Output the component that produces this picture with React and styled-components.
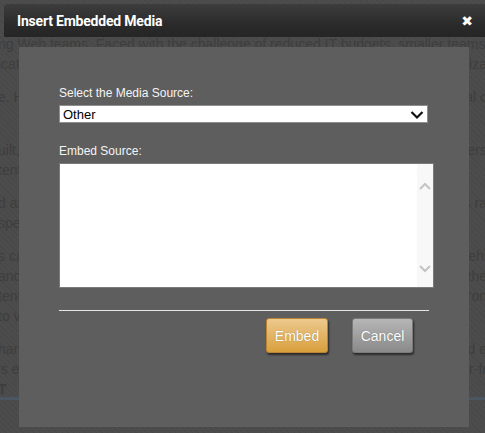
import React from 'react'
import styled, { createGlobalStyle } from 'styled-components'

const GlobalStyle = createGlobalStyle`
  html, body {
    margin: 0;
    padding: 0;
  }
  body {
    width: 485px;
    height: 433px;
    overflow: hidden;
    font-family: "Liberation Sans", Arial, sans-serif;
  }
`

const lines = [
  [['ng Web teams. Faced with the challenge of reduced IT budgets, smaller teams, and'], ['ication of web content and distributed authoring across organ', 'iza']],
  [['e. How content managers can deliver a consistent digital', 'al c']],
  [['uilt, fast to deploy, simple to use for editors and develop', 'ers'], ['tent teams across every channel and every device']],
  [['d and managed from a single place, content moves at the speed', 's ra'], ['speed of business with fewer steps and more control']],
  [['s can be published to any site, page or region that a vehicle', 'ehi'], ['and templates keep pages consistent across all of the', 'the'], ['tent is stored once and reused across every environment', 'ron'], ['to view and approve changes before they go live']],
  [['hands of editors to manage pages in place, with built in and', 'd e'], ["'s editing tools, approval workflows and a clutter-fr", 'r-fr'], ['T', null, true]],
]

const App = () => {
  return (
    <>
      <GlobalStyle />
      <Backdrop>
        <Article>
          {lines.map((para, i) => (
            <Para key={i}>
              {para.map(([start, end, bold], j) => (
                <Line key={j} $bold={bold}>
                  <span>{start}</span>
                  {end && <span>{end}</span>}
                </Line>
              ))}
            </Para>
          ))}
        </Article>
        <Rule />

        <Dialog>
          <TitleBar>
            <Title>Insert Embedded Media</Title>
            <Close>✖</Close>
          </TitleBar>
          <Body>
            <Label>Select the Media Source:</Label>
            <Select>
              <span>Other</span>
              <svg width="14" height="10" viewBox="0 0 14 10">
                <path d="M1.5 2 L7 7.5 L12.5 2" fill="none" stroke="#111" strokeWidth="2.2" />
              </svg>
            </Select>

            <Label $top={21}>Embed Source:</Label>
            <TextArea>
              <Scroll>
                <svg width="12" height="8" viewBox="0 0 12 8">
                  <path d="M1 7 L6 2 L11 7" fill="none" stroke="#c4c4c4" strokeWidth="2" />
                </svg>
                <svg width="12" height="8" viewBox="0 0 12 8">
                  <path d="M1 1 L6 6 L11 1" fill="none" stroke="#c4c4c4" strokeWidth="2" />
                </svg>
              </Scroll>
            </TextArea>

            <Divider />
            <Actions>
              <Button $variant="primary">Embed</Button>
              <Button>Cancel</Button>
            </Actions>
          </Body>
        </Dialog>
      </Backdrop>
    </>
  )
}

export default App

const Backdrop = styled.div`
  position: relative;
  width: 485px;
  height: 433px;
  overflow: hidden;
  background-color: #4c4c4c;
  background-image: repeating-linear-gradient(
    45deg,
    rgba(0, 0, 0, 0.06) 0px,
    rgba(0, 0, 0, 0.06) 1px,
    transparent 1px,
    transparent 4px
  );
`

const Article = styled.div`
  padding-top: 34px;
  margin-left: -2px;
  margin-right: -2px;
  color: #3e3e3e;
  font-size: 14px;
  line-height: 20px;
`

const Para = styled.div`
  margin-bottom: 13px;

  &:nth-child(2) {
    margin-bottom: 33px;
  }
`

const Line = styled.div`
  display: flex;
  justify-content: space-between;
  white-space: nowrap;
  overflow: hidden;
  font-weight: ${p => (p.$bold ? 700 : 400)};
`

const Rule = styled.div`
  position: absolute;
  left: 0;
  right: 0;
  top: 397px;
  height: 3px;
  background: #4a5662;
`

const Dialog = styled.div`
  position: absolute;
  left: 4px;
  top: 4px;
  width: 500px;
`

const TitleBar = styled.div`
  height: 33px;
  display: flex;
  align-items: center;
  justify-content: space-between;
  padding: 0 27px 0 13px;
  box-sizing: border-box;
  width: 496px;
  border-top-left-radius: 4px;
  background: linear-gradient(to bottom, #3d3d3d 0%, #2b2b2b 60%, #252525 100%);
`

const Title = styled.div`
  color: #ffffff;
  font-family: Roboto, "Liberation Sans", sans-serif;
  font-weight: 700;
  font-size: 14px;
  letter-spacing: -0.2px;
`

const Close = styled.div`
  color: #ffffff;
  font-family: "DejaVu Sans", sans-serif;
  font-size: 14px;
  font-weight: 700;
  line-height: 1;
  margin-top: 1px;
`

const Body = styled.div`
  margin: 10px 0 0 15px;
  width: 450px;
  height: 380px;
  box-sizing: border-box;
  padding: 39px 40px 0;
  background: #5e5e5e;
  display: flex;
  flex-direction: column;
  align-items: flex-start;
`

const Label = styled.div`
  margin-top: ${p => p.$top || 0}px;
  color: #f4f4f4;
  font-size: 12px;
  line-height: 14px;
  margin-bottom: 5px;
`

const Select = styled.div`
  width: 369px;
  height: 18px;
  box-sizing: border-box;
  border: 1px solid #8e8e8e;
  background: #ffffff;
  display: flex;
  align-items: center;
  justify-content: space-between;
  padding: 0 3px 0 3px;
  color: #000;
  font-size: 13px;

  svg {
    margin-top: 1px;
  }
`

const TextArea = styled.div`
  width: 375px;
  height: 125px;
  box-sizing: border-box;
  border: 1px solid #7a7a7a;
  background: #ffffff;
  display: flex;
  justify-content: flex-end;
`

const Scroll = styled.div`
  width: 16px;
  background: #f8f8f8;
  display: flex;
  flex-direction: column;
  align-items: center;
  justify-content: space-between;
  padding: 18px 0 14px;
`

const Divider = styled.div`
  margin-top: 22px;
  width: 370px;
  height: 1px;
  background: #e6e6e6;
`

const Actions = styled.div`
  width: 354px;
  margin-top: 7px;
  display: flex;
  justify-content: flex-end;
  gap: 24px;
`

const Button = styled.button`
  width: ${p => (p.$variant === 'primary' ? 62 : 61)}px;
  height: 35px;
  border: 1px solid ${p => (p.$variant === 'primary' ? '#b98532' : '#7a7a7a')};
  border-radius: 3px;
  background: ${p =>
    p.$variant === 'primary'
      ? 'linear-gradient(to bottom, #ecc98e 0%, #d99f3d 100%)'
      : 'linear-gradient(to bottom, #b6b6b6 0%, #8a8a8a 100%)'};
  box-shadow: 1px 2px 2px rgba(0, 0, 0, 0.55);
  color: #ffffff;
  font-family: "Liberation Sans", Arial, sans-serif;
  font-size: 14px;
  text-shadow: 0 0 1px rgba(0, 0, 0, 0.35);
  padding: 0;
  cursor: pointer;
`
